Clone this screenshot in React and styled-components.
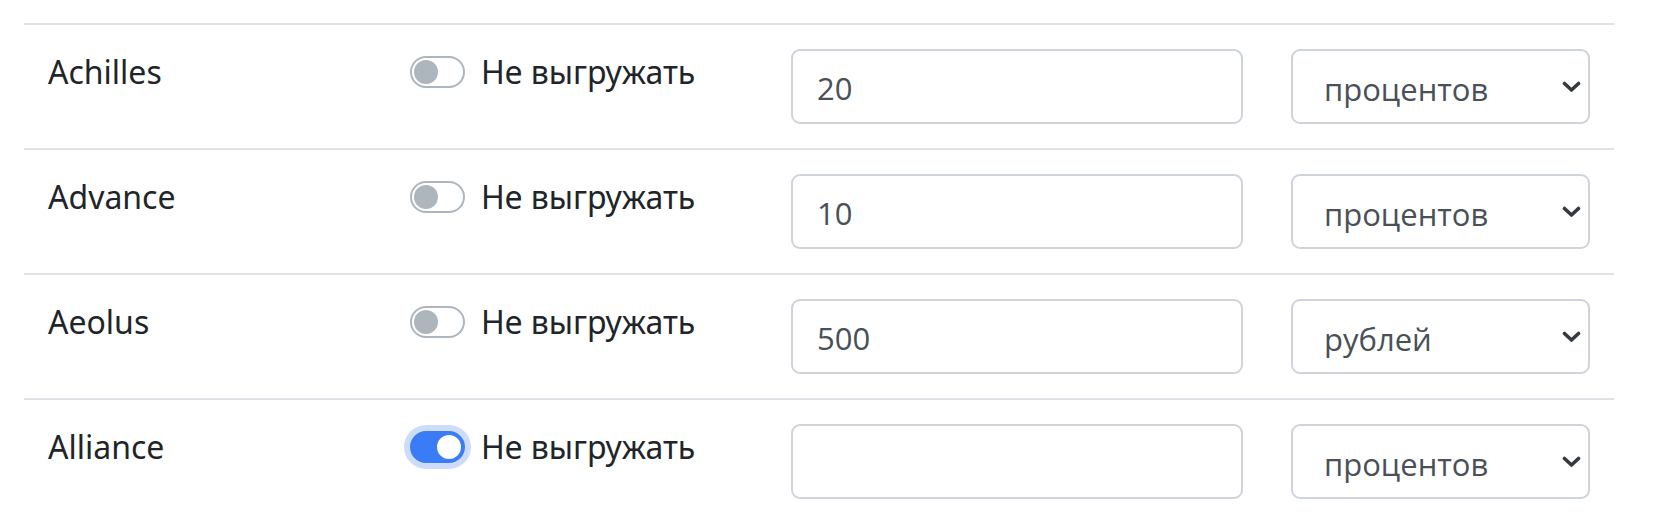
import React from "react";
import styled, { createGlobalStyle, css } from "styled-components";

const Global = createGlobalStyle`
  html, body { margin: 0; padding: 0; background: #fff; }
  body { font-family: "Noto Sans", "Open Sans", sans-serif; color: #212529; }
  * { box-sizing: border-box; }
`;

const Page = styled.div`
  padding: 23px 50px 0 24px;
  width: 1664px;
  height: 526px;
  overflow: hidden;
`;

const Row = styled.div`
  display: grid;
  grid-template-columns: 363px 380px 500px 347px;
  border-top: 2px solid #dee2e6;
`;

const Cell = styled.div`
  padding: 24px 24px 24px;
  display: flex;
  align-items: flex-start;
`;

const Name = styled.div`
  font-family: "Noto Sans", sans-serif;
  font-size: 32px;
  line-height: 46px;
  color: #212529;
`;

const SwitchWrap = styled.label`
  display: flex;
  align-items: center;
  gap: 16px;
  height: 46px;
  margin-left: -1px;
  cursor: pointer;
`;

const Track = styled.span`
  position: relative;
  width: 55px;
  height: 32px;
  border-radius: 16px;
  border: 2px solid #adb5bd;
  background: #fff;
  flex: none;
  ${(p) =>
    p.$on &&
    css`
      background: #3a7cf6;
      border-color: #3a7cf6;
      box-shadow: 0 0 0 6px #cddcfb;
    `}
`;

const Knob = styled.span`
  position: absolute;
  top: 2px;
  left: ${(p) => (p.$on ? "25px" : "2px")};
  width: 24px;
  height: 24px;
  border-radius: 50%;
  background: ${(p) => (p.$on ? "#fff" : "#adb5bd")};
`;

const SwitchText = styled.span`
  font-family: "Noto Sans", sans-serif;
  font-size: 32px;
  line-height: 46px;
  color: #212529;
`;

const Input = styled.input`
  width: 452px;
  height: 75px;
  border: 2px solid #ced4da;
  border-radius: 9px;
  padding: 2px 24px 0;
  font-family: "Open Sans", "Noto Sans", sans-serif;
  font-size: 31px;
  color: #495057;
  background: #fff;
  outline: none;
`;

const SelectWrap = styled.div`
  position: relative;
  width: 299px;
  height: 75px;
`;

const Select = styled.select`
  appearance: none;
  -webkit-appearance: none;
  width: 100%;
  height: 100%;
  border: 2px solid #ced4da;
  border-radius: 9px;
  padding: 4px 40px 0 31px;
  font-family: "Open Sans", "Noto Sans", sans-serif;
  font-size: 31px;
  color: #495057;
  background: #fff;
  outline: none;
`;

const Chevron = styled.svg`
  position: absolute;
  right: 9px;
  top: 32px;
  pointer-events: none;
`;

const rows = [
  { name: "Achilles", value: "20", unit: "процентов", on: false },
  { name: "Advance", value: "10", unit: "процентов", on: false },
  { name: "Aeolus", value: "500", unit: "рублей", on: false },
  { name: "Alliance", value: "", unit: "процентов", on: true },
];

export default function App() {
  return (
    <>
      <Global />
      <Page>
        {rows.map((r) => (
          <Row key={r.name}>
            <Cell>
              <Name>{r.name}</Name>
            </Cell>
            <Cell>
              <SwitchWrap>
                <Track $on={r.on}>
                  <Knob $on={r.on} />
                </Track>
                <SwitchText>Не выгружать</SwitchText>
              </SwitchWrap>
            </Cell>
            <Cell>
              <Input defaultValue={r.value} />
            </Cell>
            <Cell>
              <SelectWrap>
                <Select defaultValue={r.unit}>
                  <option value="процентов">процентов</option>
                  <option value="рублей">рублей</option>
                </Select>
                <Chevron width="19" height="12" viewBox="0 0 19 12">
                  <polyline
                    points="2.5,2.5 9.5,9 16.5,2.5"
                    fill="none"
                    stroke="#343a40"
                    strokeWidth="3.6"
                    strokeLinecap="round"
                    strokeLinejoin="round"
                  />
                </Chevron>
              </SelectWrap>
            </Cell>
          </Row>
        ))}
      </Page>
    </>
  );
}
